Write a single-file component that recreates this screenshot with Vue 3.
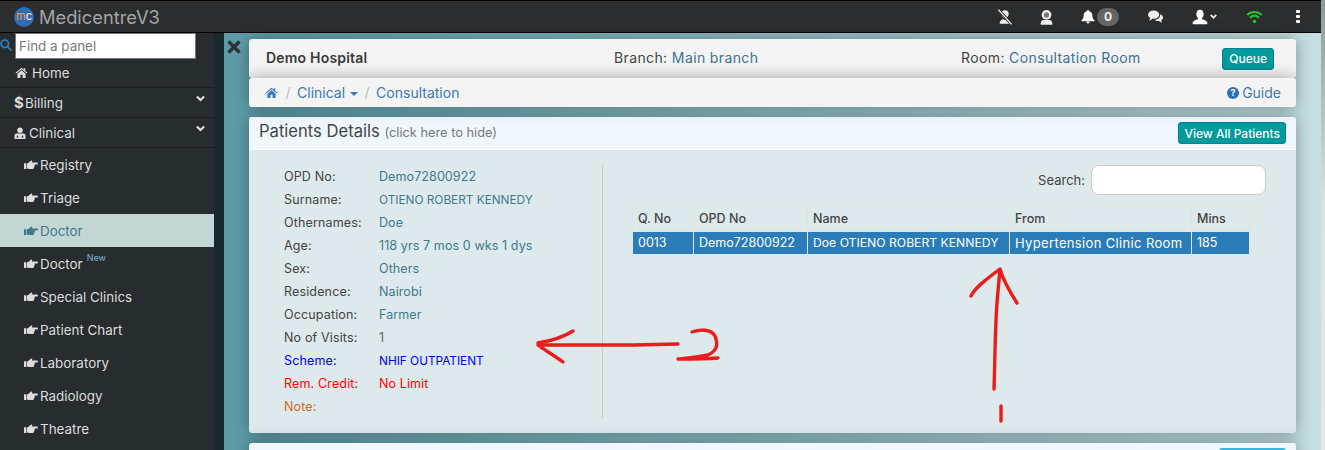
<script setup>
const hand = 'M0 9h4v10H0z M5 9.500c2 0 3-1 4-2.500l3-2.500c1-.8 2.500 0 2.200 1.200L13.500 7.500H22c2.500 0 2.500 3.500 0 3.500h-4c1 1 .8 2.600-.3 3 .5 1 .2 2.300-.9 2.600.2 1.200-.6 2.400-2 2.400H9c-1.500 0-2.500-1-4-1z'
const home = 'M12 3 1 12.500l1.300 1.500L12 6l9.700 8 1.300-1.500-4-3.300V4h-3v2.700z M4.500 14.500V22H10v-6h4v6h5.500v-7.500L12 8z'
const doctor = 'M12 1a5.500 5.500 0 1 1 0 11 5.500 5.500 0 0 1 0-11z M5 13h14c2.500 0 4 2 4 4v7H1v-7c0-2 1.500-4 4-4z'

const subItems = [
  { label: 'Registry' },
  { label: 'Triage' },
  { label: 'Doctor', active: true },
  { label: 'Doctor', badge: 'New' },
  { label: 'Special Clinics' },
  { label: 'Patient Chart' },
  { label: 'Laboratory' },
  { label: 'Radiology' },
  { label: 'Theatre' }
]

const details = [
  { label: 'OPD No:', value: 'Demo72800922' },
  { label: 'Surname:', value: 'OTIENO ROBERT KENNEDY', caps: true },
  { label: 'Othernames:', value: 'Doe' },
  { label: 'Age:', value: '118 yrs 7 mos 0 wks 1 dys' },
  { label: 'Sex:', value: 'Others' },
  { label: 'Residence:', value: 'Nairobi' },
  { label: 'Occupation:', value: 'Farmer' },
  { label: 'No of Visits:', value: '1', tone: 'plain' },
  { label: 'Scheme:', value: 'NHIF OUTPATIENT', tone: 'blue', caps: true },
  { label: 'Rem. Credit:', value: 'No Limit', tone: 'red' },
  { label: 'Note:', value: '', tone: 'orange' }
]

const columns = ['Q. No', 'OPD No', 'Name', 'From', 'Mins']
const row = ['0013', 'Demo72800922', 'Doe OTIENO ROBERT KENNEDY', 'Hypertension Clinic Room', '185']
</script>

<template>
  <div class="page">
    <div class="window">
      <header class="topbar">
        <div class="brand">
          <span class="logo"><span class="m">m</span><span class="c">c</span></span>
          <span class="brand-name">MedicentreV3</span>
        </div>
        <div class="top-icons">
          <svg class="ti" style="margin-right:27px" width="16" height="16" viewBox="0 0 24 24" fill="#eee">
            <path d="M12 2a5.500 5.500 0 0 1 5.500 5.500c0 3-2.500 6-5.500 6s-5.500-3-5.500-6A5.500 5.500 0 0 1 12 2z M4 22c0-4 2-6 5-7l3 2 3-2c3 1 5 3 5 7z" />
            <path d="M2 1 22 23" stroke="#2b2d2e" stroke-width="4.500" />
            <path d="M2 1 22 23" stroke="#eee" stroke-width="2" />
          </svg>
          <svg class="ti" style="margin-right:28px" width="13" height="16" viewBox="2 0 20 24.500" fill="#eee">
            <circle cx="12" cy="9" r="7.500" />
            <circle cx="12" cy="9" r="4" fill="#777" />
            <path d="M3 24c0-4 1-6 4-7h10c3 1 4 3 4 7z" />
          </svg>
          <svg class="ti" width="14" height="15" viewBox="0 0 24 24" fill="#fff">
            <path d="M12 1c1 0 1.800.8 1.800 1.800 3.700.8 5.700 3.700 5.700 7.200 0 5 1.500 6.500 3.500 8.500v1.500H1v-1.500c2-2 3.500-3.500 3.500-8.500 0-3.500 2-6.400 5.700-7.200C10.200 1.800 11 1 12 1z M9 21h6a3 3 0 0 1-6 0z" />
          </svg>
          <span class="count">0</span>
          <svg class="ti" style="margin-right:28px" width="17" height="15" viewBox="0 0 24 24" fill="#eee">
            <ellipse cx="9" cy="9" rx="9" ry="6.500" />
            <path d="M4 13 2 19l6-4z" />
            <path d="M19.500 8.500c2.700 1 4.500 3 4.500 5 0 2-1.200 3.600-3 4.700l1.500 4-5-3c-2.500.3-5.500-.5-7-2 5.500.3 9.500-3.500 9-8.700z" />
          </svg>
          <svg class="ti" width="16" height="16" viewBox="0 0 24 24" fill="#fff">
            <path d="M12 1c3.500 0 5.500 3 5.500 6.500 0 2.500-1 4.500-2.500 6v1.500c3 1.500 8 2 8 6.500v1.500H1V21.500c0-4.500 5-5 8-6.500v-1.500C7.500 12 6.500 10 6.500 7.500 6.500 4 8.500 1 12 1z" />
          </svg>
          <svg class="ti" style="margin:0 29px 0 2px" width="7" height="5" viewBox="0 0 10 7" fill="none" stroke="#eee" stroke-width="2.400">
            <path d="M1 1.200 5 5.200 9 1.200" />
          </svg>
          <svg class="ti" style="margin-right:33px" width="17" height="14" viewBox="0 0 24 20" fill="none" stroke="#2fc02f" stroke-width="3">
            <path d="M1.500 7c6-5.500 15-5.500 21 0 M5.500 11c4-3.500 9-3.500 13 0" />
            <circle cx="12" cy="16.500" r="2.500" fill="#2fc02f" stroke="none" />
          </svg>
          <span class="dots"><i></i><i></i><i></i></span>
        </div>
      </header>

      <div class="layout">
        <aside class="sidebar">
          <div class="finder">
            <svg width="12" height="12" viewBox="0 0 12 12" fill="none" stroke="#2c7fc0" stroke-width="1.800">
              <circle cx="4.800" cy="4.800" r="3.700" />
              <path d="M7.600 7.600 11.500 11.500" />
            </svg>
            <input class="finder-input" placeholder="Find a panel" />
          </div>
          <a class="menu-top">
            <svg width="15" height="13" viewBox="0 0 24 24" fill="#ddd"><path :d="home" /></svg>
            Home
          </a>
          <a class="menu-top">
            <b class="dollar">$</b>Billing
            <svg class="chev" width="9" height="7" viewBox="0 0 10 7" fill="none" stroke="#ddd" stroke-width="2.400"><path d="M1 1.200 5 5.200 9 1.200" /></svg>
          </a>
          <a class="menu-top">
            <svg width="12" height="14" viewBox="0 0 24 24" fill="#ddd">
              <path :d="doctor" />
              <path d="M7 17v3 M17 17v3 M5 20h4 M15 20h4" stroke="#272c2e" stroke-width="1.800" fill="none" />
            </svg>
            Clinical
            <svg class="chev" width="9" height="7" viewBox="0 0 10 7" fill="none" stroke="#ddd" stroke-width="2.400"><path d="M1 1.200 5 5.200 9 1.200" /></svg>
          </a>
          <a v-for="item in subItems" :key="item.label + item.badge" class="menu-sub" :class="{ active: item.active }">
            <svg width="14" height="14" viewBox="0 0 24 24" fill="currentColor"><path :d="hand" /></svg>
            <span>{{ item.label }}</span>
            <sup v-if="item.badge">{{ item.badge }}</sup>
          </a>
        </aside>
        <div class="side-edge"></div>

        <main class="content">
          <svg class="close" width="14" height="14" viewBox="0 0 14 14" stroke="#2b3336" stroke-width="3.400">
            <path d="M1.500 1.500 12.500 12.500 M12.500 1.500 1.500 12.500" />
          </svg>
          <div class="stack">
            <section class="card hospital">
              <strong class="h-name">Demo Hospital</strong>
              <span class="h-branch">Branch: <em>Main branch</em></span>
              <span class="h-room">Room: <em>Consultation Room</em></span>
              <button class="btn queue">Queue</button>
            </section>
            <nav class="card crumbs">
              <svg width="15" height="13" viewBox="0 0 24 24" fill="#3c78b4"><path :d="home" /></svg>
              <i class="sep">/</i>
              <a>Clinical <span class="caret"></span></a>
              <i class="sep">/</i>
              <a>Consultation</a>
              <a class="guide"><span class="q">?</span> Guide</a>
            </nav>

            <section class="card panel">
              <div class="panel-head">
                <span class="panel-title">Patients Details <small>(click here to hide)</small></span>
                <button class="btn">View All Patients</button>
              </div>
              <div class="panel-body">
                <dl class="details">
                  <div v-for="d in details" :key="d.label" class="detail" :class="d.tone">
                    <dt>{{ d.label }}</dt>
                    <dd :class="{ caps: d.caps }">{{ d.value }}</dd>
                  </div>
                </dl>
                <div class="queue-list">
                  <label class="search">Search: <input /></label>
                  <table>
                    <thead>
                      <tr><th v-for="c in columns" :key="c">{{ c }}</th></tr>
                    </thead>
                    <tbody>
                      <tr><td v-for="c in row" :key="c">{{ c }}</td></tr>
                    </tbody>
                  </table>
                </div>
              </div>
            </section>

            <section class="card next">
              <span class="next-btn"></span>
            </section>
          </div>
        </main>
      </div>
    </div>
    <div class="scrollbar"></div>

    <!-- pen annotations on top of the screenshot -->
    <svg class="ink" width="1325" height="450" fill="none" stroke="#ec1c1c" stroke-width="3.400" stroke-linecap="round" stroke-linejoin="round">
      <path d="M994 389C995 360 995 330 997 303 998 290 999 280 1000 270" />
      <path d="M971 296C975 288 985 280 1000 269 1003 280 1010 292 1017 303" />
      <path d="M1001 406V421" />
      <path d="M678 344 633 345H538" />
      <path d="M573 331C562 338 550 341 538 343 538 347 548 351 563 362" />
      <path d="M692 332C700 329 711 329 715 336 718 344 718 350 708 355 700 357 688 358 678 359 690 359 705 359 718 358" />
    </svg>
  </div>
</template>

<style>
html, body { margin: 0; height: 450px; overflow: hidden; }
</style>

<style scoped>
.page {
  position: relative;
  width: 1325px;
  height: 450px;
  overflow: hidden;
  display: flex;
  font-family: Inter, "Open Sans", sans-serif;
  font-size: 12.5px;
  color: #444;
}
.window { flex: 1; min-width: 0; }
.scrollbar { width: 4px; flex: none; background: linear-gradient(180deg, #8a9a98, #d8e2e2 45%, #e8e8e8); }
.topbar {
  height: 31px;
  border-top: 1px solid #000;
  border-bottom: 1px solid #000;
  background: #2b2d2e;
  display: flex;
  align-items: center;
  justify-content: space-between;
}
.brand { display: flex; align-items: center; padding-left: 14px; }
.logo {
  width: 20px;
  height: 20px;
  border-radius: 50%;
  background: #2f6db5;
  display: flex;
  align-items: center;
  justify-content: center;
  font-size: 11px;
  line-height: 1;
  margin-right: 5px;
}
.logo .m { color: #f09a3e; }
.logo .c { color: #fff; }
.brand-name { color: #a3a5a6; font-size: 18.300px; }
.top-icons { display: flex; align-items: center; padding-right: 21px; }
.ti { display: block; }
.count {
  width: 22px;
  height: 18px;
  margin: 0 28px 0 2px;
  border-radius: 9px;
  background: #666;
  color: #eee;
  font-weight: 700;
  font-size: 12px;
  text-align: center;
  line-height: 18px;
}
.dots { display: flex; flex-direction: column; gap: 2px; }
.dots i { width: 4px; height: 3px; background: #fff; border-radius: 1px; }

.layout { display: flex; height: 417px; }
.sidebar {
  width: 214px;
  flex: none;
  background: #272c2e;
  color: #ddd;
  font-size: 13.400px;
}
.side-edge { width: 10px; flex: none; background: #17292b; }
.finder { height: 25px; display: flex; align-items: flex-start; gap: 3px; }
.finder svg { margin-top: 6px; }
.finder-input {
  width: 181px;
  height: 26px;
  box-sizing: border-box;
  border: 1px solid #777;
  padding: 0 3px;
  font: inherit;
  background: #fff;
  outline: none;
}
.finder-input::placeholder { color: #777; }
.menu-top {
  height: 29px;
  margin-bottom: 1px;
  padding-left: 14px;
  display: flex;
  align-items: center;
  gap: 3px;
  position: relative;
  box-shadow: 0 1px 0 #1a1e20;
}
.dollar { font-size: 15px; width: 8px; margin-right: 0; }
.chev { position: absolute; right: 9px; top: 7px; }
.menu-sub {
  height: 33px;
  padding-left: 24px;
  display: flex;
  align-items: center;
  gap: 2px;
  color: #ddd;
}
.menu-sub.active { background: #c2d6d4; color: #3f7a91; }
.menu-sub sup { font-size: 9px; color: #7db3cf; align-self: flex-start; margin: 6px 0 0 2px; line-height: 1; }

.content {
  flex: 1;
  display: flex;
  align-items: flex-start;
  gap: 8px;
  padding: 6px 25px 0 3px;
  background: linear-gradient(90deg, #5b9ca8, #c5dfe3);
  min-width: 0;
}
.close { flex: none; margin-top: 1px; }
.stack { flex: 1; min-width: 0; }
.card {
  background: #f4f4f4;
  border-radius: 3px;
  box-shadow: 0 0 16px rgba(0, 0, 0, .35);
}
.hospital {
  height: 39px;
  display: flex;
  align-items: center;
  padding: 0 22px 0 17px;
  position: relative;
  font-size: 14px;
  letter-spacing: .38px;
}
.hospital span, .hospital strong { margin-bottom: 2px; }
.h-name { font-weight: 600; color: #3a3a3a; width: 348px; letter-spacing: .2px; }
.h-branch { width: 347px; }
.h-room { flex: 1; }
.hospital em, .crumbs a { font-style: normal; }
.hospital em { color: #3b7296; }
.btn {
  border: 1px solid #0a7f9c;
  border-radius: 3px;
  background: #009b9b;
  color: #fff;
  font: inherit;
  font-weight: 500;
  font-size: 12px;
  letter-spacing: 0;
  height: 22px;
  padding: 0 5px;
}
.btn.queue { padding: 0 6px; }
.crumbs {
  height: 29px;
  display: flex;
  align-items: center;
  padding: 0 15px;
  color: #3c78b4;
  font-size: 14px;
  position: relative;
}
.sep { font-style: normal; color: #bbb; margin: 0 6.500px; }
.caret {
  display: inline-block;
  border-left: 4px solid transparent;
  border-right: 4px solid transparent;
  border-top: 4px solid #3c78b4;
  vertical-align: 2px;
  margin-left: 1px;
}
.guide { margin-left: auto; display: flex; align-items: center; gap: 3px; }
.q {
  width: 12px;
  height: 12px;
  border-radius: 50%;
  background: #2f6fb5;
  color: #fff;
  font-size: 9px;
  font-weight: 700;
  line-height: 12px;
  text-align: center;
}
.panel { margin-top: 10px; height: 316px; background: #dde9ea; overflow: hidden; }
.panel-head {
  height: 32px;
  border-bottom: 1px solid #fff;
  background: #f0f7ff;
  display: flex;
  align-items: center;
  justify-content: space-between;
  padding: 0 10px;
}
.panel-title { font-size: 16.600px; color: #444; padding-bottom: 4px; }
.panel-title small { font-size: 12.800px; color: #777; }
.panel-body {
  display: flex;
  padding-top: 15px;
}
.details {
  width: 354px;
  height: 253px;
  margin: 0;
  box-sizing: border-box;
  padding: 0 0 0 35px;
  border-right: 1px solid #c4cccc;
  flex: none;
}
.detail { display: flex; height: 23px; align-items: center; }
.detail dt { width: 95px; flex: none; letter-spacing: .15px; }
.detail dd { margin: 0; color: #3f7a91; letter-spacing: .1px; }
.detail dd.caps { font-size: 11.800px; letter-spacing: 0; }
.detail.plain dd { color: #666; }
.detail.blue dt, .detail.blue dd { color: #00f; }
.detail.red dt, .detail.red dd { color: #f00; }
.detail.orange dt { color: #d2691e; }
.queue-list { flex: 1; padding: 0 30px 0 29px; }
.search { display: flex; justify-content: flex-end; align-items: center; gap: 6px; font-size: 13px; }
.search input {
  width: 175px;
  height: 30px;
  box-sizing: border-box;
  border: 1px solid #ccc;
  border-radius: 8px;
  background: #fff;
}
table {
  width: 617px;
  margin-top: 11px;
  border-collapse: collapse;
  table-layout: fixed;
}
th, td {
  box-sizing: border-box;
  padding: 0 5px;
  border: 1px solid #e2e2e2;
  text-align: left;
  white-space: nowrap;
  overflow: hidden;
}
th { height: 25px; padding-bottom: 1px; font-weight: 500; color: #444; }
td { height: 23px; padding-bottom: 1px; background: #2a7db8; color: #fff; border-color: #dde9ea; }
td:nth-child(3) { font-size: 12.200px; }
td:nth-child(4) { font-size: 13px; letter-spacing: .35px; }
th:nth-child(1) { width: 61px; }
th:nth-child(2) { width: 114px; }
th:nth-child(3) { width: 202px; }
th:nth-child(4) { width: 182px; }
th:nth-child(5) { width: 58px; }
.next { margin-top: 10px; height: 40px; background: #f0f7ff; position: relative; }
.next-btn {
  position: absolute;
  right: 10px;
  top: 5px;
  width: 67px;
  height: 22px;
  background: #3bb5dc;
  border-radius: 3px;
}
.ink { position: absolute; left: 0; top: 0; pointer-events: none; }
</style>
